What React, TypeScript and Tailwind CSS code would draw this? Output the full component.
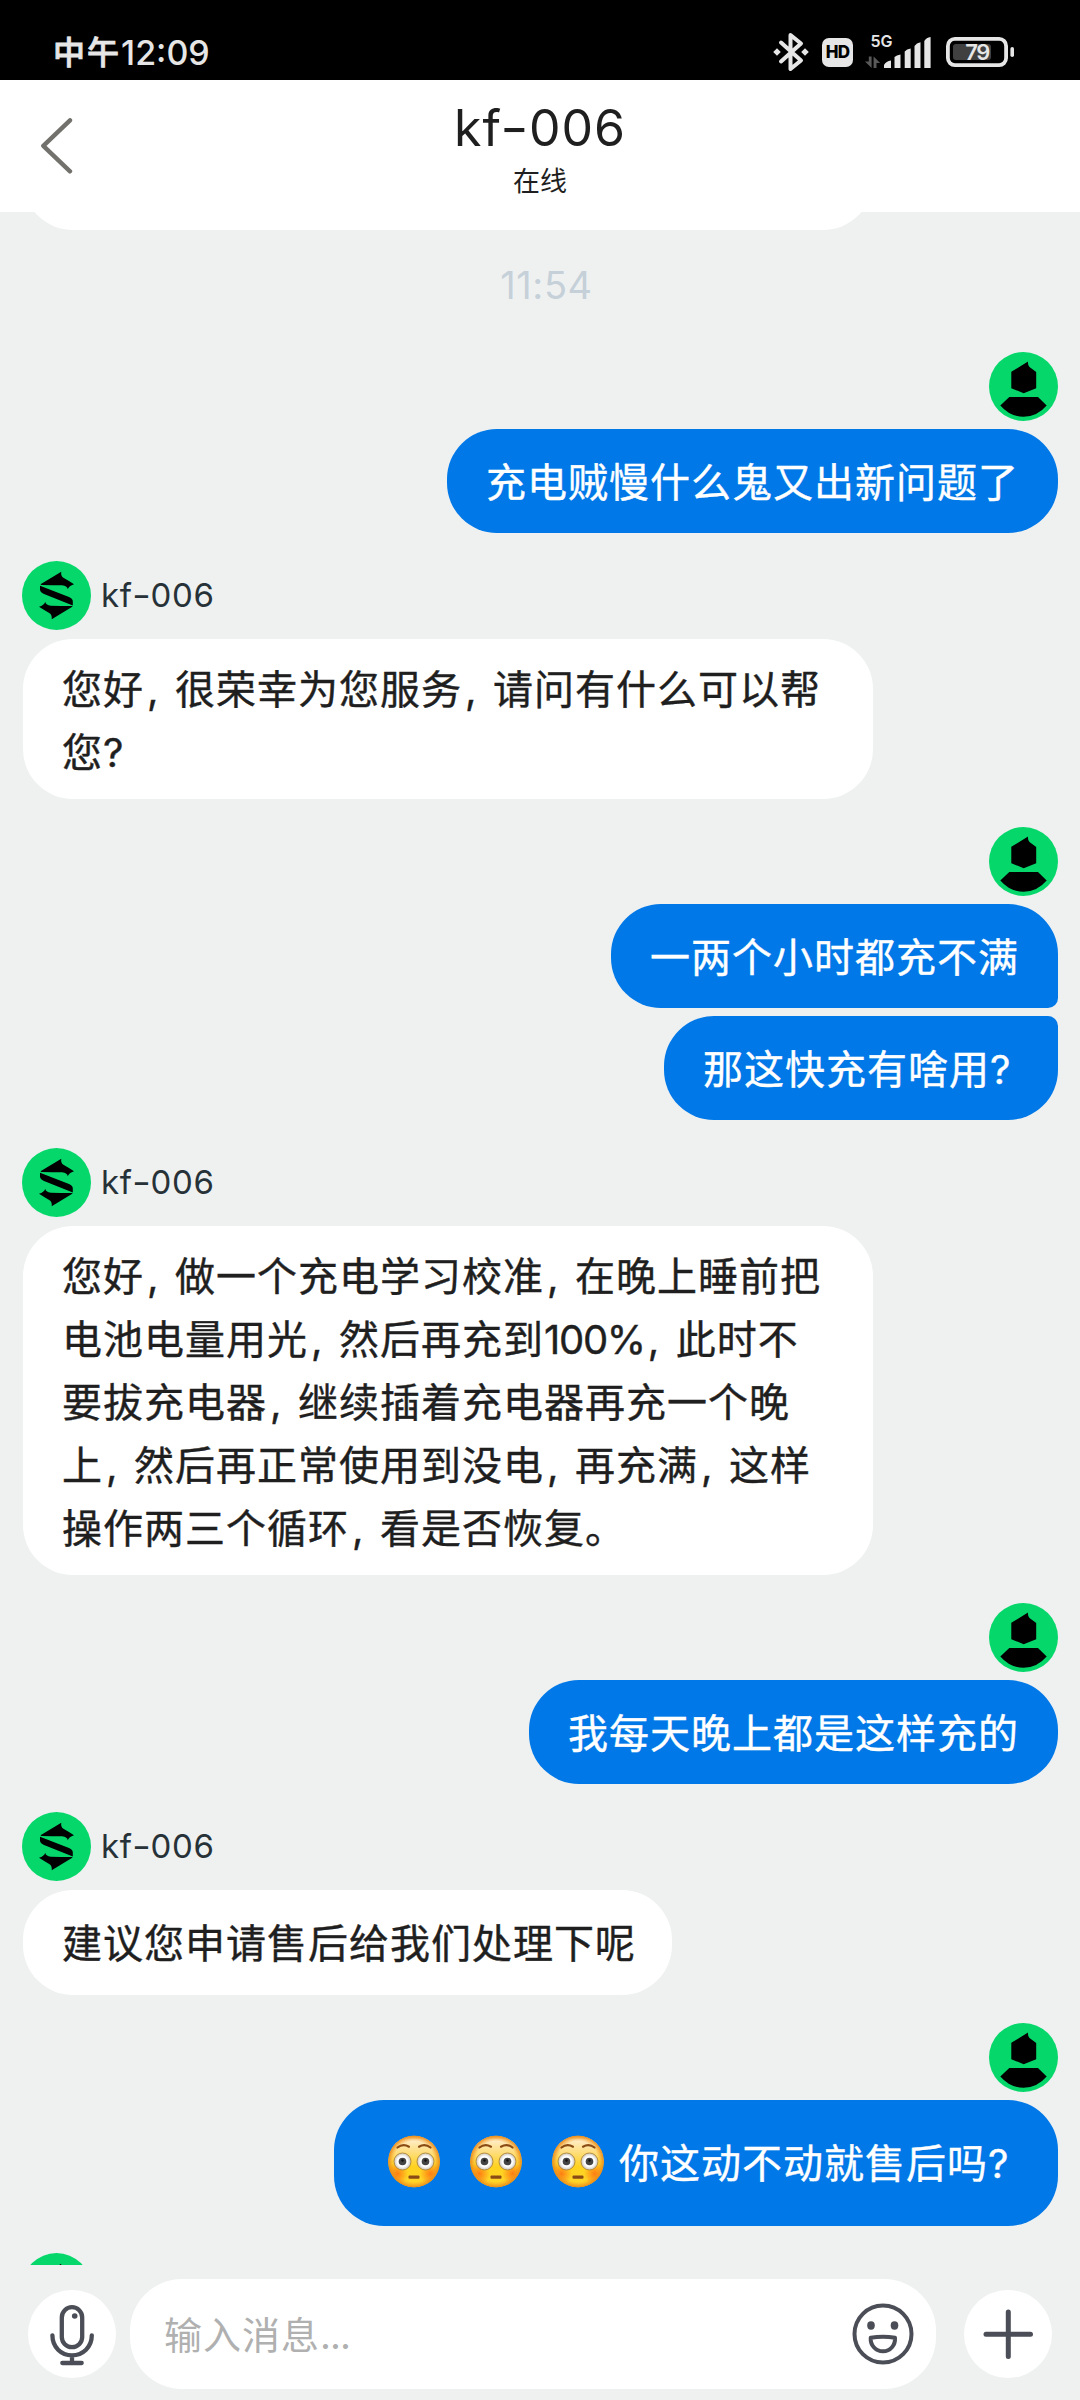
import type { ReactNode } from "react";

type Message = {
  lines: string[];
  flushed?: number;
  corners?: string;
};

type Group = {
  from: "agent" | "me";
  messages: Message[];
};

const groups: Group[] = [
  { from: "me", messages: [{ lines: ["充电贼慢什么鬼又出新问题了"] }] },
  {
    from: "agent",
    messages: [{ lines: ["您好,很荣幸为您服务,请问有什么可以帮", "您?"] }],
  },
  {
    from: "me",
    messages: [
      { lines: ["一两个小时都充不满"], corners: "rounded-br-[10px]" },
      { lines: ["那这快充有啥用?"], corners: "rounded-tr-[10px]" },
    ],
  },
  {
    from: "agent",
    messages: [
      {
        lines: [
          "您好,做一个充电学习校准,在晚上睡前把",
          "电池电量用光,然后再充到100%,此时不",
          "要拔充电器,继续插着充电器再充一个晚",
          "上,然后再正常使用到没电,再充满,这样",
          "操作两三个循环,看是否恢复。",
        ],
      },
    ],
  },
  { from: "me", messages: [{ lines: ["我每天晚上都是这样充的"] }] },
  { from: "agent", messages: [{ lines: ["建议您申请售后给我们处理下呢"] }] },
  { from: "me", messages: [{ lines: ["你这动不动就售后吗?"], flushed: 3 }] },
];

function BluetoothIcon() {
  return (
    <svg width="36" height="40" viewBox="0 0 36 40" fill="none" stroke="#e6e6e6" strokeWidth="4" strokeLinejoin="round" strokeLinecap="round">
      <path d="M8 10.5 28 28.5 17.5 37V3L28 11.5 8 29.5" />
      <path d="M4 16.2 7.8 20 4 23.8.2 20zM32 16.2l3.8 3.8-3.8 3.8-3.8-3.8z" fill="#e6e6e6" stroke="none" />
    </svg>
  );
}

function SignalIcon() {
  return (
    <svg width="67" height="37" viewBox="0 -3 67 37" fill="#e6e6e6">
      <text x="5.5" y="12.2" fontSize="16" fontWeight="600" fontFamily="Inter, sans-serif">
        5G
      </text>
      <path d="M3.8 21.5h2.8v11.5L0 26.5h3.8zM8.6 33V21.5l6.5 6.5h-3.600v5z" fill="#595959" />
      <path d="M19 33v-3q2-4 7-4.500V33zM29.500 33V22q2-2 6-2.500V33zM39.700 33V16.500q2-2.500 6-3V33zM49.500 33V11q2-3 6-3.700V33zM59.300 33V6q2-3.500 6.300-4V33z" />
    </svg>
  );
}

function BatteryIcon() {
  return (
    <svg width="68" height="30" viewBox="0 0 68 30" fill="none">
      <rect x="1.9" y="1.9" width="58.2" height="26.2" rx="7" stroke="#e6e6e6" strokeWidth="3.8" />
      <rect x="7" y="7" width="38" height="16" rx="3" fill="#404040" />
      <rect x="64.4" y="10" width="3.6" height="10" rx="1.8" fill="#e6e6e6" />
      <text x="31.8" y="23.4" textAnchor="middle" fontSize="22" fontWeight="600" fill="#e6e6e6" fontFamily="Inter, sans-serif" textLength="25">
        79
      </text>
    </svg>
  );
}

function StatusBar() {
  return (
    <div className="flex h-20 shrink-0 items-start justify-between bg-black pr-[66px] pl-[53px] text-[#e6e6e6]">
      <div className="flex pt-[29px] text-[32px] leading-[48px] font-medium">
        <span className="tracking-[2px] [-webkit-text-stroke:0.8px]">中午</span>
        <span className="text-[34px]">12:09</span>
      </div>
      <div className="flex pt-8">
        <BluetoothIcon />
        <div className="mt-[6px] ml-[13px] flex h-[29px] w-[31px] items-center justify-center rounded-[7px] bg-[#e6e6e6] text-[17px] leading-none font-extrabold tracking-[-0.8px] text-black">
          HD
        </div>
        <div className="ml-[12px]">
          <SignalIcon />
        </div>
        <div className="mt-[5px] ml-[14px]">
          <BatteryIcon />
        </div>
      </div>
    </div>
  );
}

function AgentName() {
  return (
    <span className="tracking-[0.02em]">
      kf<span className="mx-[0.03em] inline-block scale-x-125">-</span>006
    </span>
  );
}

function Header() {
  return (
    <header className="grid h-[132px] shrink-0 grid-cols-[120px_1fr_120px] bg-white">
      <svg className="mt-[38px] ml-[40px]" width="34" height="56" viewBox="0 0 34 56" fill="none" stroke="#72716c" strokeWidth="4.400" strokeLinecap="round" strokeLinejoin="round">
        <path d="M30 2.300 3.300 27.800 30 53.300" />
      </svg>
      <div className="flex flex-col items-center text-[#1f1f1f]">
        <h1 className="mt-[18px] text-[50px] leading-[60px]">
          <AgentName />
        </h1>
        <p className="mt-[5px] text-[27px] leading-[38px]">在线</p>
      </div>
    </header>
  );
}

function UserAvatar() {
  return (
    <svg className="shrink-0" width="69" height="69" viewBox="0 0 69 69">
      <circle cx="34.5" cy="34.5" r="34.5" fill="#06d76a" />
      <path d="M39 9.500q-.4 3.600 1.500 5.600L47.200 20v16.200L34.700 41.200 22.300 36.200V19.800z" />
      <path d="M20.300 45H49l8.700 8.500Q48 64.800 34.600 64.800T11.300 53.500z" />
    </svg>
  );
}

function AgentAvatar() {
  return (
    <svg className="shrink-0" width="69" height="69" viewBox="0 0 69 69">
      <circle cx="34.5" cy="34.5" r="34.5" fill="#06d76a" />
      <path d="M18.500 23.200 39.300 10.700q-.8 4.500 2.500 6.300 4 2.200 10.200 6.200-5 1.500-6.300 5.100 0-3.200-5.700-4-9-.3-20.500-.4z" />
      <path d="M50.300 45.800 29.700 58.300q.6-4.500-2.500-6.300-4-2.200-10.200-6.200 5-1.500 6.300-5.100 0 3.200 5.700 4 9 .3 21.300.4z" />
      <path d="M18 24.800 47 36q4 1.700 3.800 4.500v4L22 33q-4-1.700-4-4.500z" />
    </svg>
  );
}

function FlushedFace() {
  return (
    <svg className="mx-[15px] mb-[3px] shrink-0" width="52" height="53" viewBox="0 0 52 53">
      <defs>
        <linearGradient id="skin" x1="0" y1="0" x2="0" y2="1">
          <stop offset="0" stopColor="#f6b03a" />
          <stop offset="0.08" stopColor="#ffedc8" />
          <stop offset="0.3" stopColor="#ffdf84" />
          <stop offset="0.6" stopColor="#ffd21f" />
          <stop offset="1" stopColor="#ffd62b" />
        </linearGradient>
        <radialGradient id="rim">
          <stop offset="0.78" stopColor="#f59a1b" stopOpacity="0" />
          <stop offset="1" stopColor="#e8891a" />
        </radialGradient>
        <radialGradient id="blush">
          <stop offset="0" stopColor="#ff7a12" />
          <stop offset="1" stopColor="#ff7a12" stopOpacity="0" />
        </radialGradient>
        <radialGradient id="eye">
          <stop offset="0.6" stopColor="#fff" />
          <stop offset="1" stopColor="#c9c4b8" />
        </radialGradient>
        <clipPath id="face">
          <circle cx="26" cy="26.5" r="26" />
        </clipPath>
      </defs>
      <g clipPath="url(#face)">
        <circle cx="26" cy="26.5" r="26" fill="url(#skin)" />
        <circle cx="9" cy="39" r="11" fill="url(#blush)" />
        <circle cx="43" cy="39" r="11" fill="url(#blush)" />
        <circle cx="26" cy="26.5" r="26" fill="url(#rim)" />
      </g>
      <circle cx="14.5" cy="26.5" r="8.5" fill="url(#eye)" stroke="#a87b2d" strokeWidth="0.8" />
      <circle cx="37.5" cy="26.5" r="8.5" fill="url(#eye)" stroke="#a87b2d" strokeWidth="0.8" />
      <circle cx="14.5" cy="26.5" r="3.8" fill="#444" />
      <circle cx="37.5" cy="26.5" r="3.8" fill="#444" />
      <circle cx="14.5" cy="25.5" r="1.2" fill="#111" />
      <circle cx="37.5" cy="25.5" r="1.2" fill="#111" />
      <path d="M9.5 12.5Q15 8 21 11.7M42.5 12.5Q37 8 31 11.7" fill="none" stroke="#8a4b14" strokeWidth="2.2" strokeLinecap="round" />
      <rect x="20.5" y="40.5" width="11" height="3.2" rx="1" fill="#8a4b14" />
    </svg>
  );
}

// Punctuation takes less room than a full-width character.
function renderLine(line: string): ReactNode[] {
  return line.split(/([,?]|100%)/).map((part, i) => {
    if (part === ",") {
      return (
        <span key={i} className="inline-block w-[31px] pl-[3px]">
          ,
        </span>
      );
    }
    if (part === "?") {
      return (
        <span key={i} className="inline-block w-[29px]">
          ?
        </span>
      );
    }
    if (part === "100%") {
      return (
        <span key={i} className="tracking-[-1.3px]">
          100%
        </span>
      );
    }
    return part;
  });
}

function bubbleSize(message: Message, mine: boolean) {
  if (message.lines.length > 1) return "w-[850px] pt-[19px] pb-[15px]";
  if (message.flushed) return "h-[126px] pr-[41px]";
  return mine ? "h-[104px] pt-[2px] pr-[39px]" : "h-[105px] pt-[2px] pr-[36px]";
}

function Bubble({ message, mine }: { message: Message; mine: boolean }) {
  const color = mine ? "bg-[#0078e7] text-white" : "bg-white text-[#1f1f1f]";

  return (
    <div className={`flex items-center rounded-[50px] pl-[39px] text-[40px] leading-[63px] tracking-[1px] whitespace-nowrap [-webkit-text-stroke:0.4px] ${color} ${bubbleSize(message, mine)} ${message.corners ?? ""}`}>
      {Array.from({ length: message.flushed ?? 0 }, (_, i) => (
        <FlushedFace key={i} />
      ))}
      <div>
        {message.lines.map((line) => (
          <p key={line}>{renderLine(line)}</p>
        ))}
      </div>
    </div>
  );
}

function AgentLabel() {
  return (
    <div className="mb-px ml-[-1px] flex items-center gap-[10px] text-[33px] leading-none text-[#263238]">
      <AgentAvatar />
      <AgentName />
    </div>
  );
}

function MessageGroup({ group }: { group: Group }) {
  const mine = group.from === "me";
  return (
    <div className={`flex flex-col gap-2 ${mine ? "items-end" : "items-start"}`}>
      {mine ? <UserAvatar /> : <AgentLabel />}
      {group.messages.map((message) => (
        <Bubble key={message.lines[0]} message={message} mine={mine} />
      ))}
    </div>
  );
}

function Composer() {
  return (
    <footer className="flex h-[135px] shrink-0 items-start px-7 pt-[14px]">
      <button className="mt-[11px] h-[88px] w-[88px] rounded-full bg-white">
        <svg width="88" height="88" viewBox="0 0 88 88" fill="none" stroke="#4b4e57" strokeWidth="4.3" strokeLinecap="round">
          <rect x="33.8" y="17.2" width="20.4" height="40" rx="10.2" />
          <path d="M24.4 45.3C24.4 57 33 65.3 44 65.3S63.8 57 63.8 45.3M44 65.3V72M34.3 73H53.7" />
          <circle cx="46.7" cy="26" r="2.8" fill="#4b4e57" stroke="none" />
        </svg>
      </button>
      <div className="ml-[14px] flex h-[110px] w-[806px] items-center justify-between rounded-[52px] bg-white pr-[22px] pl-[34px]">
        <span className="pt-[2px] text-[38px] leading-[60px] tracking-[1px] text-[#b0b0b0]">
          输入消息<span className="tracking-[-1px]">...</span>
        </span>
        <svg width="62" height="62" viewBox="0 0 62 62" fill="none" stroke="#4b4e57" strokeWidth="4" strokeLinejoin="round">
          <circle cx="31" cy="31" r="28.5" />
          <path d="M18.7 34.8Q31 32.8 43 34.8C43.5 42 38.5 48.3 31 48.3S18.2 42 18.7 34.8z" />
          <ellipse cx="19" cy="22.5" rx="3.8" ry="4.2" fill="#4b4e57" stroke="none" />
          <ellipse cx="42.5" cy="22.5" rx="3.8" ry="4.2" fill="#4b4e57" stroke="none" />
        </svg>
      </div>
      <button className="mt-[11px] ml-7 h-[88px] w-[88px] rounded-full bg-white">
        <svg width="88" height="88" viewBox="0 0 88 88" stroke="#4b4e57" strokeWidth="5" strokeLinecap="round">
          <path d="M22 44.3H66.5M44.3 22V66.5" />
        </svg>
      </button>
    </footer>
  );
}

export default function App() {
  return (
    <div className="flex h-[2400px] w-[1080px] flex-col overflow-hidden bg-[#eff1f1] font-['Inter','Noto_Sans_CJK_SC',sans-serif]">
      <StatusBar />
      <Header />
      <main className="flex min-h-0 flex-1 flex-col overflow-hidden pr-[22px] pl-[23px]">
        <div className="h-[18px] w-[850px] shrink-0 overflow-hidden">
          <div className="mt-[-86px] h-[104px] rounded-[50px] bg-white" />
        </div>
        <time className="mt-[31px] shrink-0 pl-[12px] text-center text-[38px] leading-[48px] tracking-[0.6px] text-[#c5d0d8]">11:54</time>
        <div className="mt-[43px] flex flex-col gap-7">
          {groups.map((group, i) => (
            <MessageGroup key={i} group={group} />
          ))}
          <div className="mt-[-1px] ml-[-1px]">
            <AgentAvatar />
          </div>
        </div>
      </main>
      <Composer />
    </div>
  );
}
